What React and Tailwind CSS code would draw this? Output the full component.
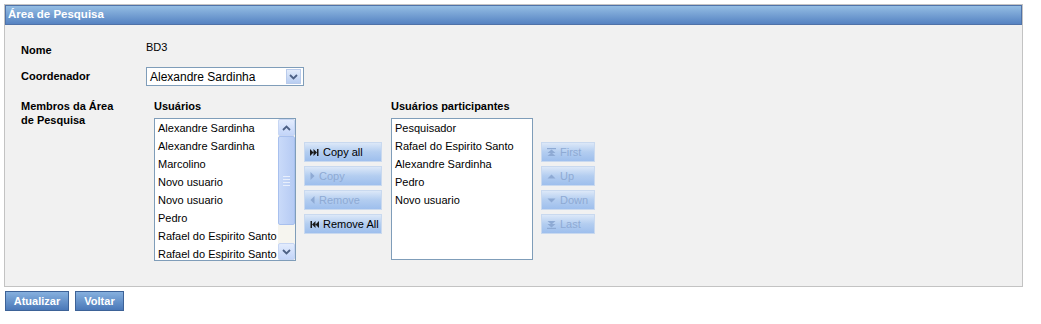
import React from "react";

const usuarios = [
  "Alexandre Sardinha",
  "Alexandre Sardinha",
  "Marcolino",
  "Novo usuario",
  "Novo usuario",
  "Pedro",
  "Rafael do Espirito Santo",
  "Rafael do Espirito Santo",
];

const participantes = [
  "Pesquisador",
  "Rafael do Espirito Santo",
  "Alexandre Sardinha",
  "Pedro",
  "Novo usuario",
];

function Icon({ kind, color }) {
  const c = color;
  if (kind === "copyall")
    return (
      <svg width="9" height="7" viewBox="0 0 9 7">
        <path d="M0 0L3.5 3.5L0 7Z M3.5 0L7 3.5L3.5 7Z" fill={c} />
        <rect x="7" y="0" width="1.5" height="7" fill={c} />
      </svg>
    );
  if (kind === "removeall")
    return (
      <svg width="9" height="7" viewBox="0 0 9 7">
        <rect x="0.5" y="0" width="1.5" height="7" fill={c} />
        <path d="M5.5 0L2 3.5L5.5 7Z M9 0L5.5 3.5L9 7Z" fill={c} />
      </svg>
    );
  if (kind === "right")
    return (
      <svg width="5" height="8" viewBox="0 0 5 8">
        <path d="M0.5 0L4.5 4L0.5 8Z" fill={c} />
      </svg>
    );
  if (kind === "left")
    return (
      <svg width="5" height="8" viewBox="0 0 5 8">
        <path d="M4.5 0L0.5 4L4.5 8Z" fill={c} />
      </svg>
    );
  if (kind === "first")
    return (
      <svg width="9" height="9" viewBox="0 0 9 9">
        <rect x="0" y="0" width="9" height="1.2" fill={c} />
        <path d="M4.5 1.5L8.5 5H0.5Z M4.5 4.5L8.5 8H0.5Z" fill={c} />
      </svg>
    );
  if (kind === "last")
    return (
      <svg width="9" height="9" viewBox="0 0 9 9">
        <path d="M4.5 4.5L8.5 1H0.5Z M4.5 7.5L8.5 4H0.5Z" fill={c} />
        <rect x="0" y="7.8" width="9" height="1.2" fill={c} />
      </svg>
    );
  if (kind === "up")
    return (
      <svg width="9" height="5" viewBox="0 0 9 5">
        <path d="M4.5 0.5L8.5 4.5H0.5Z" fill={c} />
      </svg>
    );
  return (
    <svg width="9" height="5" viewBox="0 0 9 5">
      <path d="M4.5 4.5L8.5 0.5H0.5Z" fill={c} />
    </svg>
  );
}

function ListButton({ icon, label, disabled }) {
  return (
    <div
      className={
        "flex h-[20px] items-center gap-[4px] border border-[#c9d9ef] bg-gradient-to-b from-[#dce8f8] via-[#b3cdf0] to-[#9ebfed] pl-[5px] text-[11px] " +
        (disabled ? "text-[#8eaad4]" : "text-[#000000]")
      }
    >
      <Icon kind={icon} color={disabled ? "#8eaad4" : "#1a1a1a"} />
      <span>{label}</span>
    </div>
  );
}

function Chevron({ up }) {
  return (
    <svg width="9" height="6" viewBox="0 0 9 6">
      <path
        d={up ? "M1 5L4.5 1.5L8 5" : "M1 1L4.5 4.5L8 1"}
        stroke="#4d6185"
        strokeWidth="1.8"
        fill="none"
      />
    </svg>
  );
}

export default function App() {
  return (
    <div className="h-[324px] w-[1041px] bg-white font-['Liberation_Sans',Arial,sans-serif] text-[11px] text-black">
      <div className="ml-[4px] pt-[4px]">
        <div className="w-[1019px] border border-[#c3c3c3] bg-[#f1f1f1]">
          <div className="flex h-[20px] items-center border border-[#4f72a8] bg-gradient-to-b from-[#94bde3] to-[#5683c2] pl-[2px] text-[11.5px] font-bold text-white">
            Área de Pesquisa
          </div>

          <div className="pl-[16px] pb-[25px]">
            <div className="mt-[16px] flex h-[18px] items-center">
              <div className="w-[125px] font-bold">Nome</div>
              <div className="-mt-[5px]">BD3</div>
            </div>

            <div className="mt-[8px] flex items-center">
              <div className="w-[125px] font-bold">Coordenador</div>
              <div className="flex h-[19px] w-[158px] items-center justify-between border border-[#7f9db9] bg-white pl-[3px] pr-[2px] text-[12px]">
                <span>Alexandre Sardinha</span>
                <div className="flex h-[15px] w-[15px] items-center justify-center border border-[#b9cbeb] bg-gradient-to-b from-[#e3ecfb] to-[#b8cdf1]">
                  <Chevron />
                </div>
              </div>
            </div>

            <div className="mt-[13px] flex">
              <div className="w-[133px] font-bold leading-[14px]">
                Membros da Área
                <br />
                de Pesquisa
              </div>

              <div>
                <div className="h-[14px] font-bold leading-[14px]">Usuários</div>
                <div className="mt-[5px] flex h-[143px] w-[142px] border border-[#7f9db9] bg-white">
                  <div className="flex-1 pl-[3px]">
                    {usuarios.map((u, i) => (
                      <div key={i} className="h-[18px] leading-[18px] whitespace-nowrap">
                        {u}
                      </div>
                    ))}
                  </div>
                  <div className="flex w-[17px] flex-col bg-[#f6f5ef]">
                    <div className="flex h-[17px] items-center justify-center rounded-[2px] border border-[#c7d6f3] bg-gradient-to-b from-[#e3ecfd] to-[#c3d5f9]">
                      <Chevron up />
                    </div>
                    <div className="flex h-[89px] flex-col items-center justify-center gap-[2px] rounded-[2px] border border-[#a8c0ee] bg-gradient-to-r from-[#c9daf9] to-[#b6cbf4]">
                      <div className="h-px w-[7px] bg-[#e8effc]" />
                      <div className="h-px w-[7px] bg-[#e8effc]" />
                      <div className="h-px w-[7px] bg-[#e8effc]" />
                      <div className="h-px w-[7px] bg-[#e8effc]" />
                    </div>
                    <div className="flex-1" />
                    <div className="flex h-[17px] items-center justify-center rounded-[2px] border border-[#c7d6f3] bg-gradient-to-b from-[#e3ecfd] to-[#c3d5f9]">
                      <Chevron />
                    </div>
                  </div>
                </div>
              </div>

              <div className="ml-[8px] mt-[43px] flex w-[78px] flex-col gap-[4px]">
                <ListButton icon="copyall" label="Copy all" />
                <ListButton icon="right" label="Copy" disabled />
                <ListButton icon="left" label="Remove" disabled />
                <ListButton icon="removeall" label="Remove All" />
              </div>

              <div className="ml-[9px]">
                <div className="h-[14px] font-bold leading-[14px]">Usuários participantes</div>
                <div className="mt-[5px] h-[142px] w-[142px] border border-[#7f9db9] bg-white pl-[3px]">
                  {participantes.map((u, i) => (
                    <div key={i} className="h-[18px] leading-[18px] whitespace-nowrap">
                      {u}
                    </div>
                  ))}
                </div>
              </div>

              <div className="ml-[8px] mt-[43px] flex w-[54px] flex-col gap-[4px]">
                <ListButton icon="first" label="First" disabled />
                <ListButton icon="up" label="Up" disabled />
                <ListButton icon="down" label="Down" disabled />
                <ListButton icon="last" label="Last" disabled />
              </div>
            </div>
          </div>
        </div>

        <div className="mt-[4px] flex gap-[6px] pl-[1px]">
          <button className="h-[20px] w-[64px] border border-[#3d6297] bg-gradient-to-b from-[#86b0de] to-[#4a78b8] text-[11px] font-bold text-white">
            Atualizar
          </button>
          <button className="h-[20px] w-[49px] border border-[#3d6297] bg-gradient-to-b from-[#86b0de] to-[#4a78b8] text-[11px] font-bold text-white">
            Voltar
          </button>
        </div>
      </div>
    </div>
  );
}
